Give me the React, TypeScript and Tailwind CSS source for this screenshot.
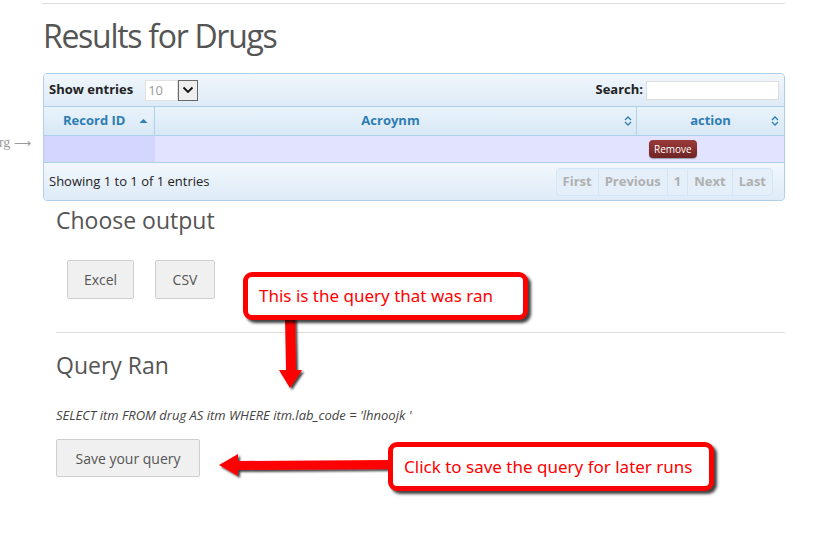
import React from "react";

function SortBoth() {
  return (
    <svg width="8" height="12" viewBox="0 0 8 12" className="text-[#2e7db2]">
      <path d="M1 5 L4 2 L7 5" fill="none" stroke="currentColor" strokeWidth="1.3" />
      <path d="M1 7 L4 10 L7 7" fill="none" stroke="currentColor" strokeWidth="1.3" />
    </svg>
  );
}

function SortUp() {
  return (
    <svg width="9" height="6" viewBox="0 0 9 6">
      <path d="M0.5 5 L4.5 1 L8.5 5 Z" fill="#2e7db2" />
    </svg>
  );
}

function Callout({ text, className }: { text: string; className: string }) {
  return (
    <div
      className={
        "absolute bg-white border-[5px] border-[#ff0000] rounded-[9px] shadow-[3px_3px_3px_rgba(0,0,0,0.75)] flex items-center px-[11px] text-[#ff0000] text-[17px] whitespace-nowrap " +
        className
      }
      style={{ fontFamily: '"Noto Sans", sans-serif' }}
    >
      {text}
    </div>
  );
}

export default function App() {
  const pages = ["First", "Previous", "1", "Next", "Last"];
  return (
    <div
      className="relative w-[817px] h-[559px] bg-white overflow-hidden text-[#333]"
      style={{ fontFamily: '"Open Sans", sans-serif' }}
    >
      <div className="pl-[42px] pr-[32px] pt-[3px]">
        <div className="border-t border-[#dddddd]" />
        <h1 className="mt-[14px] text-[32px] leading-[36px] text-[#555] tracking-[-1.3px] ml-[1px]">
          Results for Drugs
        </h1>
      </div>

      <div className="flex mt-[19px]">
        <div className="w-[43px] shrink-0 overflow-hidden flex justify-end pt-[59px]">
          <span
            className="whitespace-nowrap text-[14px] text-[#999] pr-[12px]"
            style={{ fontFamily: '"Liberation Serif", serif' }}
          >
            rg <span className="text-[12px]" style={{ fontFamily: '"DejaVu Sans", sans-serif' }}>⟶</span>
          </span>
        </div>

        <div className="w-[742px] border border-[#aed0ea] rounded-[4px] overflow-hidden text-[13px]">
          <div className="h-[32px] flex items-center justify-between pl-[5px] pr-[5px] bg-gradient-to-b from-[#f0f6fb] to-[#deebf7]">
            <div className="flex items-center">
              <span className="font-bold text-[#222]">Show entries</span>
              <div className="ml-[12px] flex items-center h-[21px]">
                <div className="w-[33px] h-[21px] border border-[#e2e2e2] bg-white text-[#999] text-[13px] pl-[2px] leading-[19px]">
                  10
                </div>
                <div className="w-[20px] h-[21px] border border-[#666] bg-[#eeeeee] flex items-center justify-center">
                  <svg width="12" height="8" viewBox="0 0 12 8">
                    <path d="M1.5 1.5 L6 6 L10.5 1.5" fill="none" stroke="#111" strokeWidth="1.8" />
                  </svg>
                </div>
              </div>
            </div>
            <div className="flex items-center">
              <span className="font-bold text-[#222] mr-[3px]">Search:</span>
              <div className="w-[133px] h-[19px] border border-[#dddddd] bg-white" />
            </div>
          </div>

          <div className="flex h-[30px] border-t border-[#aed0ea] border-b bg-gradient-to-b from-[#e9f3fb] to-[#d9e8f6] font-bold text-[#2e7db2]">
            <div className="w-[111px] border-r border-[#aed0ea] flex items-center relative">
              <span className="pl-[19px]">Record ID</span>
              <span className="absolute right-[6px] top-[11px]">
                <SortUp />
              </span>
            </div>
            <div className="w-[482px] border-r border-[#aed0ea] flex items-center justify-center relative">
              <span className="-ml-[10px]">Acroynm</span>
              <span className="absolute right-[4px] top-[8px]">
                <SortBoth />
              </span>
            </div>
            <div className="flex-1 flex items-center justify-center relative">
              <span>action</span>
              <span className="absolute right-[5px] top-[8px]">
                <SortBoth />
              </span>
            </div>
          </div>

          <div className="flex h-[27px] bg-[#e2e3ff] border-b border-[#aed0ea]">
            <div className="w-[111px] bg-[#d3d6ff]" />
            <div className="w-[482px]" />
            <div className="flex-1 flex items-center pl-[12px]">
              <button className="h-[18px] px-[5px] rounded-[4px] bg-gradient-to-b from-[#9b3a3a] to-[#6e2424] text-white text-[10px] leading-[18px] shadow-[0_1px_1px_rgba(0,0,0,0.3)]">
                Remove
              </button>
            </div>
          </div>

          <div className="h-[37px] flex items-center justify-between pl-[5px] pr-[11px] bg-gradient-to-b from-[#f2f7fc] to-[#deebf7]">
            <span className="text-[#222]">Showing 1 to 1 of 1 entries</span>
            <div className="flex h-[28px] border border-[#d4e6f5] rounded-[4px] bg-[#e4eff9] font-bold text-[#b0b0b0]">
              {pages.map((p, i) => (
                <div
                  key={p}
                  className={
                    "flex items-center px-[6px] " +
                    (i > 0 ? "border-l border-[#d4e6f5]" : "")
                  }
                >
                  {p}
                </div>
              ))}
            </div>
          </div>
        </div>
      </div>

      <div className="pl-[56px] pr-[32px]">
        <h2 className="mt-[3px] text-[23px] leading-[32px] text-[#555]">Choose output</h2>
        <div className="flex gap-[21px] mt-[24px] ml-[11px]">
          <button className="w-[67px] h-[39px] border border-[#cfcfcf] rounded-[2px] bg-[#f0f0f0] text-[14px] text-[#555]">
            Excel
          </button>
          <button className="w-[60px] h-[39px] border border-[#cfcfcf] rounded-[2px] bg-[#f0f0f0] text-[14px] text-[#555]">
            CSV
          </button>
        </div>
        <div className="mt-[33px] border-t border-[#dddddd]" />
        <h2 className="mt-[16px] text-[23px] leading-[32px] text-[#555]">Query Ran</h2>
        <p className="mt-[26px] text-[13px] italic text-[#444] leading-[16px]">
          SELECT itm FROM drug AS itm WHERE itm.lab_code = 'lhnoojk '
        </p>
        <button className="mt-[16px] w-[144px] h-[38px] border border-[#cfcfcf] rounded-[2px] bg-[#f0f0f0] text-[14px] text-[#555]">
          Save your query
        </button>
      </div>

      <svg className="absolute left-0 top-0 pointer-events-none" width="817" height="559">
        <defs>
          <filter id="sh" x="-20%" y="-20%" width="140%" height="140%">
            <feDropShadow dx="2" dy="2" stdDeviation="1.2" floodColor="#000" floodOpacity="0.75" />
          </filter>
        </defs>
        <g filter="url(#sh)" fill="#ff0000">
          <polygon points="285,318 295,318 296,370 302,370 290,388 279,370 286,370" />
          <polygon points="392,460 392,469 238,470 238,476 219,465 238,454 238,461" />
        </g>
      </svg>

      <Callout text="This is the query that was ran" className="left-[243px] top-[272px] w-[285px] h-[48px]" />
      <Callout text="Click to save the query for later runs" className="left-[388px] top-[442px] w-[326px] h-[49px]" />
    </div>
  );
}
